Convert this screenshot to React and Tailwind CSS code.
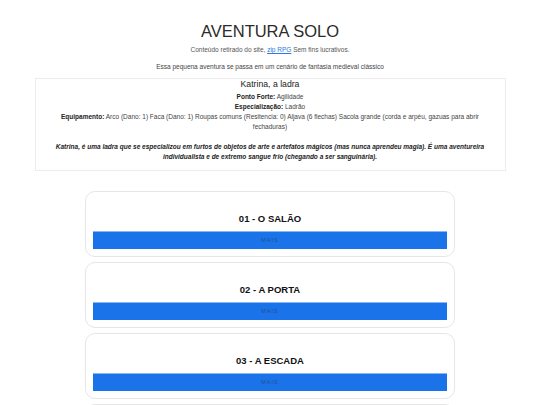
import React from 'react';

const sections = ['01 - O SALÃO', '02 - A PORTA', '03 - A ESCADA', '04 - O CORREDOR'];

const SectionCard = ({ title }) => (
  <div className="flex h-[66px] flex-col rounded-[10px] border border-[#e6e6e6] bg-white px-[7px] pt-[21px] pb-[7px]">
    <h2 className="text-center text-[9.5px] font-bold leading-[12px] text-[#111]">{title}</h2>
    <button
      type="button"
      className="mt-[6px] h-[18px] w-full border-t border-[#8ab6f2] bg-[#1a73e8] text-[5.5px] leading-[17px] tracking-[1px] text-[#24508f]"
    >
      MAIS
    </button>
  </div>
);

export default function App() {
  return (
    <div className="min-h-screen bg-white pb-8 font-['Liberation_Sans',Arial,sans-serif] text-[#333]">
      <header className="pt-[21px] text-center">
        <h1 className="text-[16.5px] leading-[20px] text-[#2b2b2b]">AVENTURA SOLO</h1>
        <p className="mt-[4px] text-[6.5px] leading-[9px] text-[#555]">
          Conteúdo retirado do site,{' '}
          <a href="#" className="text-[#2a7ae2] underline">zip RPG</a> Sem fins lucrativos.
        </p>
        <p className="mt-[8px] text-[6.5px] leading-[9px] text-[#444]">
          Essa pequena aventura se passa em um cenário de fantasia medieval clássico
        </p>
      </header>

      <section className="mx-auto mt-[7px] w-[471px] border border-[#ececec] px-[10px] pb-[8px] text-center">
        <h3 className="text-[8.7px] leading-[11px] text-[#222]">Katrina, a ladra</h3>
        <div className="mt-[2px] text-[6.5px] leading-[10px] text-[#444]">
          <p><b className="text-[#222]">Ponto Forte:</b> Agilidade</p>
          <p><b className="text-[#222]">Especialização:</b> Ladrão</p>
          <p>
            <b className="text-[#222]">Equipamento:</b> Arco (Dano: 1) Faca (Dano: 1) Roupas comuns (Resitencia: 0) Aljava (6 flechas) Sacola grande (corda e arpéu, gazuas para abrir fechaduras)
          </p>
          <p className="mt-[10px] font-bold italic text-[#222]">
            Katrina, é uma ladra que se especializou em furtos de objetos de arte e artefatos mágicos (mas nunca aprendeu magia). É uma aventureira individualista e de extremo sangue frio (chegando a ser sanguinária).
          </p>
        </div>
      </section>

      <div className="mx-auto mt-[20px] flex w-[370px] flex-col gap-[5px]">
        {sections.map((s) => (
          <SectionCard key={s} title={s} />
        ))}
      </div>
    </div>
  );
}
